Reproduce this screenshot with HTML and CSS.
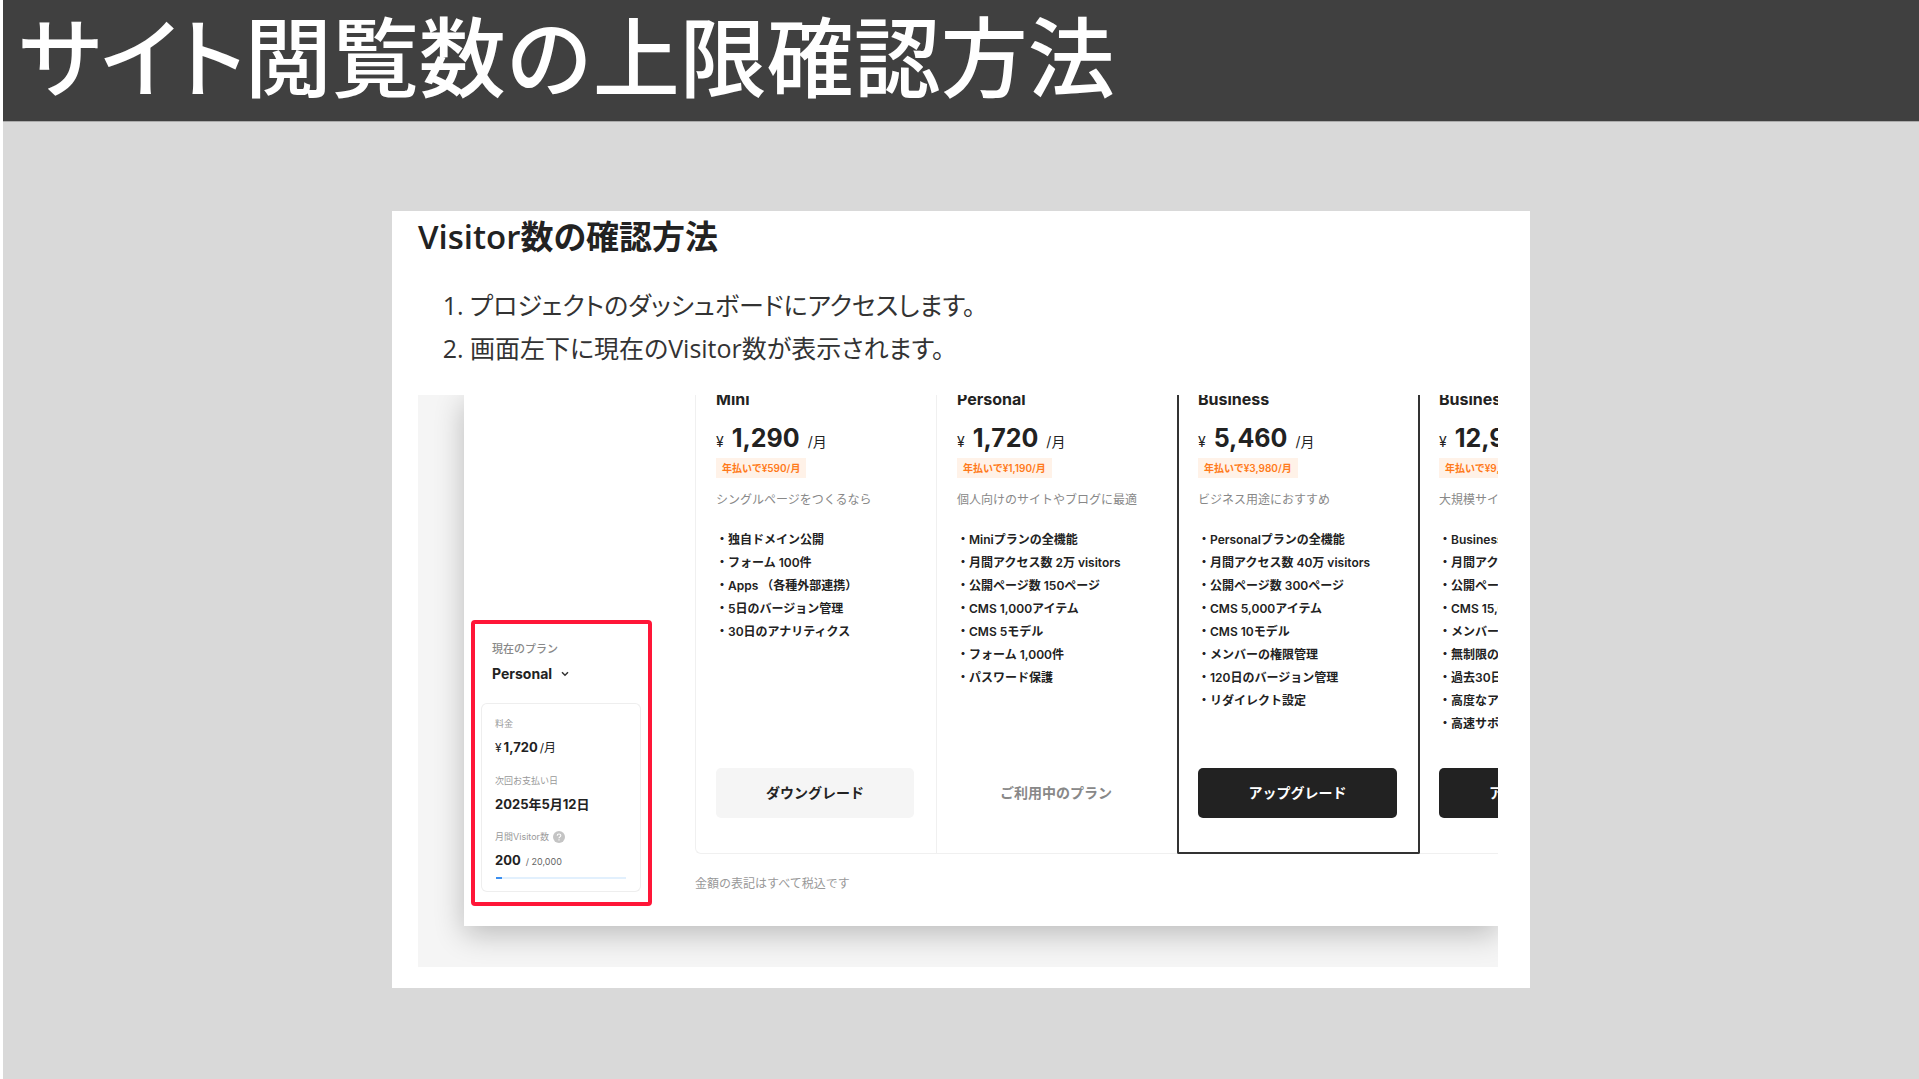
FILE: index.html
```html
<!DOCTYPE html>
<html lang="ja">
<head>
<meta charset="utf-8">
<meta name="viewport" content="width=device-width, initial-scale=1">
<title>サイト閲覧数の上限確認方法</title>
<link rel="stylesheet" href="styles.css">
</head>
<body>
<div class="slide">
  <header class="slide-header">
    <h1 class="slide-title"><span class="kana">サイト</span>閲覧数の上限確認方法</h1>
  </header>
  <main class="panel">
    <h2 class="panel-title">Visitor数の確認方法</h2>
    <ol class="steps">
      <li>プロジェクトのダッシュボードにアクセスします。</li>
      <li>画面左下に現在のVisitor数が表示されます。</li>
    </ol>
    <div class="preview">
      <div class="window">
        <aside class="sidebar">
          <section class="current">
            <label class="current-label" for="plan">現在のプラン</label>
            <div class="picker">
              <select id="plan" class="picker-select">
                <option>Personal</option>
              </select>
              <svg class="chevron" viewBox="0 0 8 6" aria-hidden="true"><path d="M1 1.2 L4 4.2 L7 1.2" fill="none" stroke="#333" stroke-width="1.5"/></svg>
            </div>
            <dl class="usage">
              <dt>料金</dt>
              <dd><span class="yen">¥</span><b class="amount">1,720</b><span class="per">/月</span></dd>
              <dt>次回お支払い日</dt>
              <dd><b class="amount">2025年5月12日</b></dd>
              <dt id="visitors">月間Visitor数
                <svg class="help" viewBox="0 0 12 12" aria-hidden="true"><circle cx="6" cy="6" r="6" fill="#c4c4c4"/><path d="M4.2 4.7 C4.2 2.4 7.8 2.4 7.8 4.6 C7.8 5.9 6 5.9 6 7.2 M6 8.3 V9.4" fill="none" stroke="#fff" stroke-width="1.1"/></svg>
              </dt>
              <dd><b class="amount">200</b><span class="quota">/ 20,000</span></dd>
            </dl>
            <progress class="meter" value="200" max="20000" aria-labelledby="visitors"></progress>
          </section>
        </aside>
        <div class="pricing">
          <div class="plans">
            <article class="plan">
              <h3 class="plan-name">Mini</h3>
              <p class="price"><span>¥</span><b>1,290</b><span>/月</span></p>
              <p class="yearly">年払いで¥590/月</p>
              <p class="about">シングルページをつくるなら</p>
              <ul class="features">
                <li>独自ドメイン公開</li>
                <li>フォーム 100件</li>
                <li>Apps （各種外部連携）</li>
                <li>5日のバージョン管理</li>
                <li>30日のアナリティクス</li>
              </ul>
              <button class="action action-down" type="button">ダウングレード</button>
            </article>
            <article class="plan">
              <h3 class="plan-name">Personal</h3>
              <p class="price"><span>¥</span><b>1,720</b><span>/月</span></p>
              <p class="yearly">年払いで¥1,190/月</p>
              <p class="about">個人向けのサイトやブログに最適</p>
              <ul class="features">
                <li>Miniプランの全機能</li>
                <li>月間アクセス数 2万 visitors</li>
                <li>公開ページ数 150ページ</li>
                <li>CMS 1,000アイテム</li>
                <li>CMS 5モデル</li>
                <li>フォーム 1,000件</li>
                <li>パスワード保護</li>
              </ul>
              <p class="action action-current">ご利用中のプラン</p>
            </article>
            <article class="plan plan-featured">
              <h3 class="plan-name">Business</h3>
              <p class="price"><span>¥</span><b>5,460</b><span>/月</span></p>
              <p class="yearly">年払いで¥3,980/月</p>
              <p class="about">ビジネス用途におすすめ</p>
              <ul class="features">
                <li>Personalプランの全機能</li>
                <li>月間アクセス数 40万 visitors</li>
                <li>公開ページ数 300ページ</li>
                <li>CMS 5,000アイテム</li>
                <li>CMS 10モデル</li>
                <li>メンバーの権限管理</li>
                <li>120日のバージョン管理</li>
                <li>リダイレクト設定</li>
              </ul>
              <button class="action action-up" type="button">アップグレード</button>
            </article>
            <article class="plan">
              <h3 class="plan-name">Business</h3>
              <p class="price"><span>¥</span><b>12,9</b></p>
              <p class="yearly">年払いで¥9,</p>
              <p class="about">大規模サイ</p>
              <ul class="features">
                <li>Business</li>
                <li>月間アク</li>
                <li>公開ペー</li>
                <li>CMS 15,0</li>
                <li>メンバー</li>
                <li>無制限の</li>
                <li>過去30日</li>
                <li>高度なア</li>
                <li>高速サポ</li>
              </ul>
              <button class="action action-up" type="button">アップグレード</button>
            </article>
          </div>
          <p class="tax-note">金額の表記はすべて税込です</p>
        </div>
      </div>
    </div>
  </main>
</div>
</body>
</html>
```
FILE: styles.css
```css
* {
  box-sizing: border-box;
}

body,
h1, h2, h3, p, ol, ul, dl, dd {
  margin: 0;
}

body {
  background: #fff;
  color: #222;
  font-family: Inter, "Noto Sans CJK JP", sans-serif;
}

.slide {
  min-height: 100vh;
  margin-left: 3px;
  padding-bottom: 90px;
  background: #d9d9d9;
}

.slide-header {
  padding: 0 16px;
  border-bottom: 1px solid #ababab;
  background: #404040;
}

.slide-title {
  padding-bottom: 15px;
  color: #fff;
  font: 500 87px/106px "Noto Sans CJK JP", sans-serif;
}

.kana {
  font-feature-settings: "palt";
}

.panel {
  width: 90%;
  max-width: 1138px;
  margin: 89px auto 0;
  padding: 4px 32px 21px 26px;
  background: #fff;
}

.panel-title {
  font: 600 33px/44px "Open Sans", "Noto Sans CJK JP", sans-serif;
  font-feature-settings: "palt";
}

.steps {
  margin-top: 25px;
  padding-left: 52px;
  color: #333;
  font: 400 25px/43px "Open Sans", "Noto Sans CJK JP", sans-serif;
  font-feature-settings: "palt";
}

.preview {
  margin-top: 25px;
  padding: 0 0 41px 46px;
  overflow: hidden;
  background: #f5f5f5;
}

.window {
  display: grid;
  grid-template-columns: 231px minmax(0, 1fr);
  background: #fff;
  box-shadow: 0 8px 28px rgba(0, 0, 0, 0.24);
}

/* Current plan box */

.sidebar {
  display: flex;
  align-items: flex-end;
  padding: 0 43px 20px 7px;
}

.current {
  width: 100%;
  padding: 17px 7px 10px 6px;
  border: 4px solid #ff1638;
  border-radius: 4px;
}

.current-label {
  display: block;
  padding-left: 11px;
  color: #888;
  font-size: 11px;
  font-weight: 500;
  line-height: 16px;
}

.picker {
  display: flex;
  align-items: center;
  gap: 8px;
  padding: 7px 11px 19px;
}

.picker-select {
  padding: 0;
  border: 0;
  appearance: none;
  background: none;
  color: #222;
  font: 700 14px/20px Inter, sans-serif;
}

.chevron {
  width: 8px;
  height: 6px;
}

.usage {
  padding: 12px 13px 0;
  border: 1px solid #eee;
  border-bottom: 0;
  border-radius: 6px 6px 0 0;
  font-size: 12px;
}

.usage dt {
  display: flex;
  align-items: center;
  gap: 4px;
  color: #999;
  font-size: 9px;
  line-height: 16px;
}

.usage dd {
  display: flex;
  align-items: baseline;
  margin-bottom: 10px;
  line-height: 30px;
}

.usage dd:last-child {
  margin-bottom: 0;
}

.usage .amount {
  font-size: 13px;
}

.yen {
  margin-right: 2px;
}

.per {
  margin-left: 2px;
}

.quota {
  margin-left: 5px;
  color: #666;
  font-size: 9px;
}

.help {
  width: 12px;
  height: 12px;
}

.meter {
  display: block;
  width: 100%;
  height: 15px;
  padding: 0 14px 13px;
  border: 1px solid #eee;
  border-top: 0;
  border-radius: 0 0 6px 6px;
  appearance: none;
  background: none;
}

.meter::-webkit-progress-inner-element {
  height: 2px;
}

.meter::-webkit-progress-bar {
  height: 2px;
  background: #e2f0fd;
}

.meter::-webkit-progress-value {
  min-width: 6px;
  background: #3b8ff0;
}

/* Plan table */

.pricing {
  overflow: hidden;
}

.plans {
  display: grid;
  grid-template-columns: repeat(4, 241px);
  height: 459px;
  border-bottom: 1px solid #f0f0f0;
  border-left: 1px solid #f0f0f0;
  border-radius: 0 0 0 6px;
}

.plan {
  display: flex;
  flex-direction: column;
  align-items: flex-start;
  margin-top: -9px;
  padding: 0 22px 35px 20px;
  border-right: 1px solid #f0f0f0;
}

.plan-featured {
  margin-right: -1px;
  margin-bottom: -1px;
  margin-left: -1px;
  padding: 0 21px 34px 19px;
  border: 2px solid #333;
  border-top: 0;
  border-radius: 0 0 2px 2px;
}

.plan-name {
  font-size: 16px;
  font-weight: 700;
  line-height: 26px;
}

.price {
  display: flex;
  align-items: baseline;
  gap: 8px;
  margin-top: 10px;
  font-size: 14px;
  line-height: 32px;
}

.price b {
  font-size: 25px;
}

.yearly {
  padding: 0 6px;
  background: #fff2e8;
  color: #ff7a1a;
  font-size: 10px;
  font-weight: 600;
  line-height: 20px;
}

.about {
  margin-top: 13px;
  color: #888;
  font-size: 12px;
  line-height: 18px;
  white-space: nowrap;
}

.features {
  margin-top: 19px;
  padding: 0;
  font-size: 12px;
  font-weight: 600;
  line-height: 23px;
  list-style: none;
  white-space: nowrap;
}

.features li::before {
  content: "・";
}

.action {
  width: 100%;
  margin-top: auto;
  padding: 0;
  border: 0;
  border-radius: 5px;
  font: 600 14px/50px Inter, "Noto Sans CJK JP", sans-serif;
  text-align: center;
}

.action-down {
  background: #f5f5f5;
  color: #222;
}

.action-current {
  color: #888;
}

.action-up {
  background: #222;
  color: #fff;
}

.tax-note {
  padding: 19px 0 31px;
  color: #999;
  font-size: 12px;
  line-height: 22px;
}
```
